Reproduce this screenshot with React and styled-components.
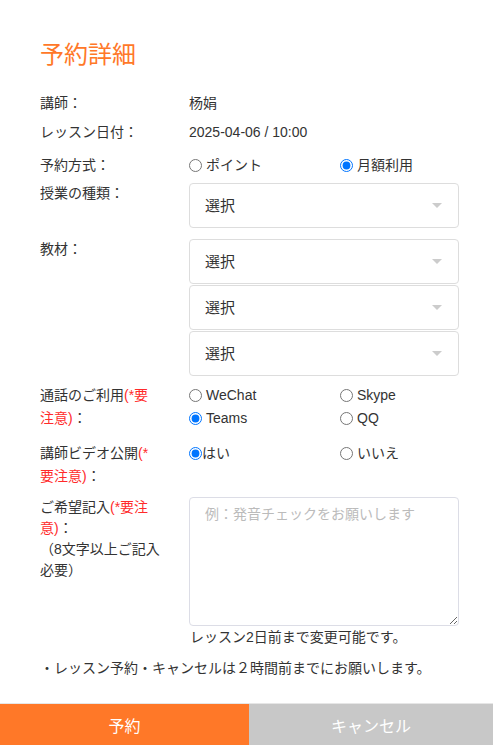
import React from "react";
import styled, { createGlobalStyle } from "styled-components";

const Global = createGlobalStyle`
  html, body { margin: 0; padding: 0; background: #fff; }
  body {
    font-family: "Liberation Sans", "Noto Sans CJK JP", Arial, sans-serif;
    color: #333;
  }
  * { box-sizing: border-box; }
`;

const Page = styled.div`
  width: 493px;
  height: 745px;
  display: flex;
  flex-direction: column;
  background: #fff;
  overflow: hidden;
`;

const Body = styled.div`
  flex: 1;
  padding: 38px 34px 0 40px;
  display: flex;
  flex-direction: column;
`;

const Title = styled.h1`
  margin: 0;
  font-size: 24px;
  line-height: 34px;
  font-weight: normal;
  color: #ff7828;
`;

const Row = styled.div`
  display: grid;
  grid-template-columns: 149px 1fr;
  align-items: start;
  margin-top: ${(p) => p.$mt}px;
  font-size: 14px;
  line-height: ${(p) => p.$lh || 20}px;
`;

const Label = styled.div`
  max-width: 121px;
  color: #333;
`;

const Req = styled.span`
  color: #ff2a2a;
`;

const Value = styled.div`
  color: #333;
`;

const Options = styled.div`
  display: grid;
  grid-template-columns: 151px 1fr;
  align-content: start;
`;

const Option = styled.label`
  display: flex;
  align-items: center;
  gap: ${(p) => (p.$tight ? 0 : 4)}px;
  white-space: nowrap;
`;

const Radio = styled.input.attrs({ type: "radio" })`
  margin: 0;
  width: 13px;
  height: 13px;
`;

const Selects = styled.div`
  display: flex;
  flex-direction: column;
  gap: 1px;
`;

const SelectBox = styled.div`
  height: 45px;
  border: 1px solid #dddddd;
  border-radius: 4px;
  display: flex;
  align-items: center;
  justify-content: space-between;
  padding: 0 16px 0 15px;
  font-size: 15px;
  color: #333;
`;

const Arrow = styled.span`
  width: 0;
  height: 0;
  border-left: 5px solid transparent;
  border-right: 5px solid transparent;
  border-top: 5px solid #cccccc;
`;

const TextArea = styled.textarea`
  display: block;
  width: 100%;
  height: 129px;
  border: 1px solid #dcdde6;
  border-radius: 4px;
  padding: 7px 15px;
  font-family: "Liberation Sans", "Noto Sans CJK JP", Arial, sans-serif;
  font-size: 14px;
  line-height: 18px;
  color: #333;
  resize: vertical;
  outline: none;
  &::placeholder { color: #bbbbbb; }
`;

const Hint = styled.div`
  margin-top: 2px;
  font-size: 14px;
  line-height: 18px;
  padding-left: 1px;
  color: #333;
`;

const Notice = styled.div`
  margin-top: 13px;
  font-size: 14px;
  line-height: 18px;
  color: #333;
`;

const Footer = styled.div`
  display: grid;
  grid-template-columns: 249px 1fr;
  height: 42px;
  border-top: 1px solid #e6e6e6;
`;

const Btn = styled.button`
  border: none;
  margin: 0;
  padding: 0;
  font-family: "Liberation Sans", "Noto Sans CJK JP", Arial, sans-serif;
  font-size: 16px;
  color: #fff;
  background: ${(p) => (p.$primary ? "#ff7828" : "#c8c8c8")};
`;

const Select = () => (
  <SelectBox>
    <span>選択</span>
    <Arrow />
  </SelectBox>
);

export default function App() {
  return (
    <Page>
      <Global />
      <Body>
        <Title>予約詳細</Title>
        <Row $mt={21}>
          <Label>講師：</Label>
          <Value>杨娟</Value>
        </Row>
        <Row $mt={9}>
          <Label>レッスン日付：</Label>
          <Value>2025-04-06 / 10:00</Value>
        </Row>
        <Row $mt={13}>
          <Label>予約方式：</Label>
          <Options>
            <Option>
              <Radio name="m" />
              ポイント
            </Option>
            <Option>
              <Radio name="m" defaultChecked />
              月額利用
            </Option>
          </Options>
        </Row>
        <Row $mt={8}>
          <Label>授業の種類：</Label>
          <Select />
        </Row>
        <Row $mt={11}>
          <Label>教材：</Label>
          <Selects>
            <Select />
            <Select />
            <Select />
          </Selects>
        </Row>
        <Row $mt={8} $lh={23}>
          <Label>
            通話のご利用<Req>(*要注意)</Req>：
          </Label>
          <Options>
            <Option>
              <Radio name="c" />
              WeChat
            </Option>
            <Option>
              <Radio name="c" />
              Skype
            </Option>
            <Option>
              <Radio name="c" defaultChecked />
              Teams
            </Option>
            <Option>
              <Radio name="c" />
              QQ
            </Option>
          </Options>
        </Row>
        <Row $mt={12} $lh={23}>
          <Label>
            講師ビデオ公開<Req>(*要注意)</Req>：
          </Label>
          <Options>
            <Option $tight>
              <Radio name="v" defaultChecked />
              はい
            </Option>
            <Option>
              <Radio name="v" />
              いいえ
            </Option>
          </Options>
        </Row>
        <Row $mt={9} $lh={21}>
          <Label>
            ご希望記入<Req>(*要注意)</Req>：
            <br />
            （8文字以上ご記入必要）
          </Label>
          <div>
            <TextArea placeholder="例：発音チェックをお願いします" />
            <Hint>レッスン2日前まで変更可能です。</Hint>
          </div>
        </Row>
        <Notice>・レッスン予約・キャンセルは２時間前までにお願いします。</Notice>
      </Body>
      <Footer>
        <Btn $primary>予約</Btn>
        <Btn>キャンセル</Btn>
      </Footer>
    </Page>
  );
}
